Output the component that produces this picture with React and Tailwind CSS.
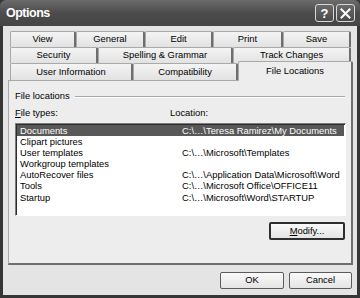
import React from "react";

const font = "font-['Liberation_Sans',Arial,sans-serif]";

const rowOne = [
  { label: "View", w: "w-[66px]" },
  { label: "General", w: "w-[69px]" },
  { label: "Edit", w: "w-[68px]" },
  { label: "Print", w: "w-[70px]" },
  { label: "Save", w: "w-[68px]" },
];

const rowTwo = [
  { label: "Security", w: "w-[88px]" },
  { label: "Spelling & Grammar", w: "w-[135px]" },
  { label: "Track Changes", w: "w-[118px]" },
];

const fileTypes = [
  ["Documents", "C:\\…\\Teresa Ramirez\\My Documents"],
  ["Clipart pictures", ""],
  ["User templates", "C:\\…\\Microsoft\\Templates"],
  ["Workgroup templates", ""],
  ["AutoRecover files", "C:\\…\\Application Data\\Microsoft\\Word"],
  ["Tools", "C:\\…\\Microsoft Office\\OFFICE11"],
  ["Startup", "C:\\…\\Microsoft\\Word\\STARTUP"],
];

// One ordinary (unselected) tab
const Tab = ({ label, w, h = "h-[16px]" }) => (
  <div
    className={`${w} ${h} shrink-0 flex items-center justify-center bg-gradient-to-b from-[#f4f4f4] to-[#e2e2e2] border-t border-l border-[#a9a9a9] border-r-2 border-r-[#6e6e6e] rounded-t-[2px] text-[9.4px] text-black`}
  >
    {label}
  </div>
);

const Button = ({ children, className = "" }) => (
  <div
    className={`flex items-center justify-center bg-gradient-to-b from-[#fafafa] to-[#e4e4e4] border border-[#5c5c5c] rounded-[2px] text-[9.4px] text-black ${className}`}
  >
    {children}
  </div>
);

export default function App() {
  return (
    <div className={`w-[360px] h-[298px] bg-[#363636] flex flex-col ${font}`}>
      {/* Title bar */}
      <div className="h-[26px] shrink-0 flex items-center pl-[6px] pr-[5px] bg-gradient-to-b from-[#6c6c6c] via-[#4b4b4b] to-[#454545] rounded-t-[6px]">
        <span className="text-white font-bold text-[12.5px] tracking-[-0.5px]">
          Options
        </span>
        <div className="ml-auto flex gap-[2px]">
          <div className="w-[19px] h-[18px] rounded-[3px] border border-[#d8d8d8] bg-gradient-to-b from-[#6a6a6a] to-[#4a4a4a] flex items-center justify-center text-white font-bold text-[13px] leading-none">
            ?
          </div>
          <div className="w-[19px] h-[18px] rounded-[3px] border border-[#d8d8d8] bg-gradient-to-b from-[#6a6a6a] to-[#4a4a4a] flex items-center justify-center">
            <svg width="11" height="11" viewBox="0 0 11 11">
              <path
                d="M1.5 1.5 L9.5 9.5 M9.5 1.5 L1.5 9.5"
                stroke="#fff"
                strokeWidth="2"
                strokeLinecap="square"
              />
            </svg>
          </div>
        </div>
      </div>

      {/* Dialog body */}
      <div className="flex-1 mx-[3px] mb-[3px] bg-[#e4e4e4] flex flex-col pt-[5px] pl-[5px] pr-[4px]">
        {/* Tabs */}
        <div className="flex flex-col px-[2px]">
          <div className="flex">
            {rowOne.map((t) => (
              <Tab key={t.label} {...t} />
            ))}
          </div>
          <div className="flex">
            {rowTwo.map((t) => (
              <Tab key={t.label} {...t} />
            ))}
          </div>
          <div className="flex items-end h-[17px]">
            <Tab label="User Information" w="w-[123px]" h="h-[17px]" />
            <Tab label="Compatibility" w="w-[105px]" h="h-[17px]" />
            <div className="relative z-10 w-[115px] h-[20px] -mb-px shrink-0 flex items-center justify-center bg-[#ededed] border-t border-l border-[#a9a9a9] border-r-2 border-r-[#6e6e6e] rounded-t-[2px] text-[9.4px] text-black pb-[1px]">
              File Locations
            </div>
          </div>
        </div>

        {/* Tab panel */}
        <div className="h-[185px] shrink-0 bg-[#ededed] border-t border-l border-[#a9a9a9] border-r-2 border-b-2 border-r-[#6e6e6e] border-b-[#6e6e6e] flex flex-col pt-[10px] pl-[6px] pr-[5px] text-[9.4px] text-black">
          <div className="h-[11px] flex items-center">
            <span>File locations</span>
            <div className="flex-1 ml-[5px] mr-[1px] h-[2px] border-t border-[#a8a8a8] border-b border-b-white" />
          </div>

          <div className="h-[11px] mt-[6px] flex items-center">
            <span className="w-[155px]">
              <span className="underline">F</span>ile types:
            </span>
            <span>Location:</span>
          </div>

          <div className="h-[93px] mt-[4px] bg-white border-t border-l border-[#7c7c7c] border-r border-b border-r-white border-b-white shadow-[inset_1px_1px_0_#2c2c2c] pt-[1px] pl-[1px]">
            {fileTypes.map(([name, loc], i) => (
              <div
                key={name}
                className={`h-[11.2px] flex items-center pl-[3px] mr-[1px] ${
                  i === 0 ? "bg-[#585858] text-white" : ""
                }`}
              >
                <span className="w-[162px] shrink-0 whitespace-nowrap">{name}</span>
                <span className="whitespace-nowrap">{loc}</span>
              </div>
            ))}
          </div>

          <div className="mt-[6px] self-end mr-[1px] w-[76px] h-[18px] flex items-center justify-center bg-gradient-to-b from-[#fafafa] to-[#e4e4e4] border-2 border-[#2e2e2e] rounded-[2px]">
            <span>
              <span className="underline">M</span>odify...
            </span>
          </div>
        </div>

        {/* Bottom buttons */}
        <div className="flex justify-end gap-[5px] mt-[7px] pr-[1px]">
          <Button className="w-[64px] h-[17px]">OK</Button>
          <Button className="w-[63px] h-[17px]">Cancel</Button>
        </div>
      </div>
    </div>
  );
}
